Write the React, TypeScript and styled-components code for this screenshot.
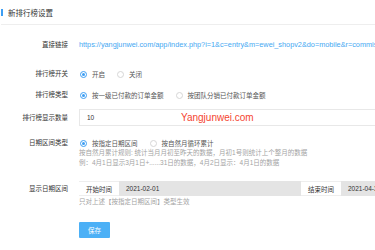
import React from 'react'
import styled, { createGlobalStyle } from 'styled-components'

const GlobalStyle = createGlobalStyle`
  html, body {
    margin: 0;
    padding: 0;
    background: #fff;
    overflow: hidden;
  }
  body {
    font-family: "Liberation Sans", "Noto Sans CJK SC", sans-serif;
    color: #333;
  }
`

type Option = { label: string; checked?: boolean }

const RadioGroup: React.FC<{ options: Option[] }> = ({ options }) => (
  <Radios>
    {options.map((opt) => (
      <RadioItem key={opt.label}>
        <RadioDot checked={!!opt.checked} />
        <RadioText>{opt.label}</RadioText>
      </RadioItem>
    ))}
  </Radios>
)

const App: React.FC = () => {
  return (
    <Page>
      <GlobalStyle />
      <Header>
        <HeaderBar />
        <HeaderTitle>新排行榜设置</HeaderTitle>
      </Header>

      <Form>
        <Row $top={13}>
          <Label>直接链接</Label>
          <LinkText>https://yangjunwei.com/app/index.php?i=1&amp;c=entry&amp;m=ewei_shopv2&amp;do=mobile&amp;r=commission.rank</LinkText>
        </Row>

        <Row $top={15}>
          <Label>排行榜开关</Label>
          <RadioGroup options={[{ label: '开启', checked: true }, { label: '关闭' }]} />
        </Row>

        <Row $top={7}>
          <Label>排行榜类型</Label>
          <RadioGroup
            options={[
              { label: '按一级已付款的订单金额', checked: true },
              { label: '按团队分销已付款订单金额' }
            ]}
          />
        </Row>

        <Row $top={7}>
          <Label>排行榜显示数量</Label>
          <InputWrap>
            <NumberInput>10</NumberInput>
            <Watermark>Yangjunwei.com</Watermark>
          </InputWrap>
        </Row>

        <Row $top={12} $alignTop>
          <Label>日期区间类型</Label>
          <Stack>
            <RadioGroup
              options={[
                { label: '按指定日期区间', checked: true },
                { label: '按自然月循环累计' }
              ]}
            />
            <Help>按自然月累计规则: 统计当月月初至昨天的数据，月初1号则统计上个整月的数据</Help>
            <Help>例：4月1日显示3月1日+......31日的数据，4月2日显示：4月1日的数据</Help>
          </Stack>
        </Row>

        <Row $top={14} $alignTop>
          <Label $height={15}>显示日期区间</Label>
          <Stack>
            <DateGroup>
              <Addon>开始时间</Addon>
              <DateField>2021-02-01</DateField>
              <Addon>结束时间</Addon>
              <DateField>2021-04-30</DateField>
            </DateGroup>
            <Note>只对上述【按指定日期区间】类型生效</Note>
          </Stack>
        </Row>

        <Row $top={15}>
          <Label />
          <SaveButton>保存</SaveButton>
        </Row>
      </Form>
    </Page>
  )
}

const Page = styled.div`
  width: 375px;
  height: 250px;
  overflow: hidden;
  background: #fff;
`

const Header = styled.div`
  display: flex;
  align-items: center;
  height: 25px;
  margin-left: 1px;
  border-bottom: 1px solid #eeeeee;
  padding-top: 1px;
  box-sizing: border-box;
`

const HeaderBar = styled.span`
  width: 2px;
  height: 7px;
  background: #3d9ef3;
  margin-right: 5px;
`

const HeaderTitle = styled.span`
  font-size: 7.5px;
  color: #333;
`

const Form = styled.div`
  display: flex;
  flex-direction: column;
`

const Row = styled.div<{ $top: number; $alignTop?: boolean }>`
  display: grid;
  grid-template-columns: 68px auto;
  column-gap: 11px;
  align-items: ${({ $alignTop }) => ($alignTop ? 'start' : 'center')};
  margin-top: ${({ $top }) => $top}px;
`

const Label = styled.div<{ $height?: number }>`
  text-align: right;
  font-size: 6.5px;
  color: #333;
  line-height: ${({ $height }) => $height || 10}px;
  white-space: nowrap;
`

const LinkText = styled.div`
  font-size: 7.3px;
  line-height: 14px;
  color: #45a8f2;
  white-space: nowrap;
`

const Radios = styled.div`
  display: flex;
  align-items: center;
  height: 14px;
`

const RadioItem = styled.label`
  display: flex;
  align-items: center;
  margin-right: 11px;
`

const RadioDot = styled.span<{ checked: boolean }>`
  width: 7px;
  height: 7px;
  border-radius: 50%;
  box-sizing: border-box;
  margin-left: 1px;
  margin-right: 5px;
  border: 1px solid ${({ checked }) => (checked ? '#3d9ef3' : '#d6d6d6')};
  display: flex;
  align-items: center;
  justify-content: center;

  &::after {
    content: '';
    width: 3px;
    height: 3px;
    border-radius: 50%;
    background: ${({ checked }) => (checked ? '#3d9ef3' : 'transparent')};
  }
`

const RadioText = styled.span`
  font-size: 6.5px;
  color: #555;
  white-space: nowrap;
`

const InputWrap = styled.div`
  position: relative;
`

const NumberInput = styled.div`
  width: 420px;
  height: 17px;
  box-sizing: border-box;
  border: 1px solid #e8e8e8;
  padding-left: 7px;
  display: flex;
  align-items: center;
  font-size: 6.5px;
  color: #333;
`

const Watermark = styled.span`
  position: absolute;
  left: 102px;
  top: 1px;
  font-size: 10px;
  line-height: 15px;
  color: #f5452f;
  white-space: nowrap;
`

const Stack = styled.div`
  display: flex;
  flex-direction: column;
  & > ${Radios} {
    height: 10px;
  }
`

const Help = styled.div`
  font-size: 6.5px;
  line-height: 9.5px;
  color: #a3a3a3;
  white-space: nowrap;
`

const DateGroup = styled.div`
  display: flex;
  height: 15px;
  width: 460px;
`

const Addon = styled.div`
  width: 40px;
  flex: none;
  box-sizing: border-box;
  background: #fff;
  display: flex;
  align-items: center;
  justify-content: center;
  font-size: 6.5px;
  color: #333;
  border-top: 1px solid #eeeeee;
  border-bottom: 1px solid #eeeeee;
`

const DateField = styled.div`
  width: 182px;
  flex: none;
  box-sizing: border-box;
  background: #e4e4e4;
  display: flex;
  align-items: center;
  padding-left: 7px;
  font-size: 6.5px;
  color: #333;
`

const Note = styled.div`
  font-size: 6.5px;
  line-height: 11px;
  color: #a3a3a3;
  white-space: nowrap;
`

const SaveButton = styled.button`
  width: 31px;
  height: 16px;
  border: none;
  padding: 0;
  background: #4cb0f6;
  color: #fff;
  font-family: inherit;
  font-size: 6.5px;
  border-radius: 1px;
`

export default App
